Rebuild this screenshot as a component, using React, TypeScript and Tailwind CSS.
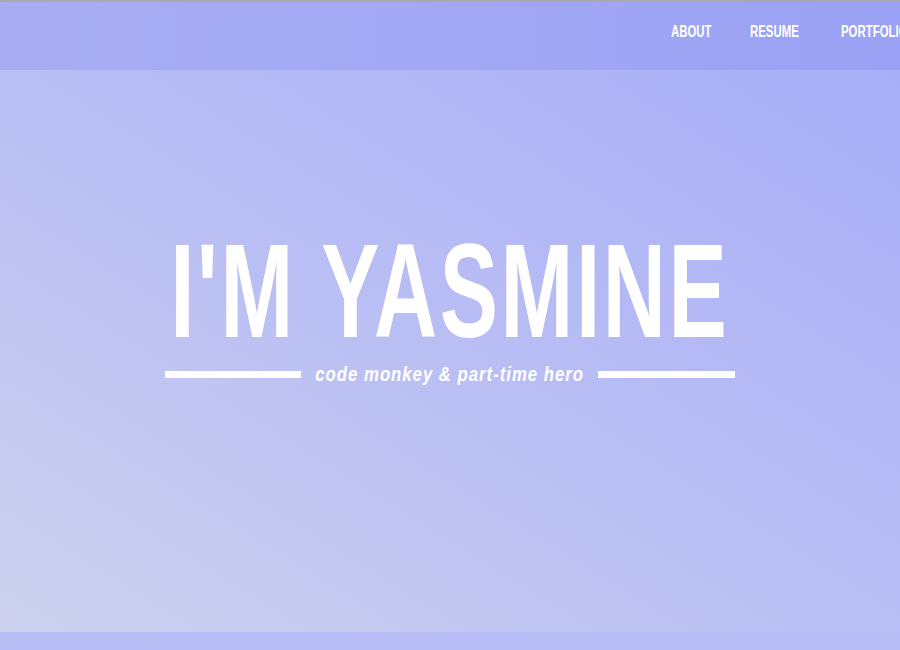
import React from 'react';

const NAV = ['ABOUT', 'RESUME', 'PORTFOLIO', 'CONTACT'];

const App: React.FC = () => {
  return (
    <div className="w-[900px] h-[650px] overflow-hidden flex flex-col font-['Liberation_Sans',Arial,sans-serif] text-white">
      <div className="h-[2px] bg-[#a9a9ad] shrink-0" />
      <header className="h-[68px] shrink-0 flex items-center bg-gradient-to-r from-[#a8adf2] to-[#9ba2f5]">
        <nav className="ml-[671px] flex gap-[26px] whitespace-nowrap -mt-[10px]">
          {NAV.map(item => (
            <a key={item} href="#" className="text-[15px] font-bold inline-block origin-left scale-x-[0.76] scale-y-[1.12]">
              {item}
            </a>
          ))}
        </nav>
      </header>

      <section className="h-[562px] shrink-0 flex flex-col items-center bg-gradient-to-tr from-[#cdd1ee] via-[#b9bef4] to-[#a8aef8]">
        <h1 className="mt-[161px] text-[118px] leading-none font-bold tracking-[0.03em] inline-block scale-x-[0.74] scale-y-[1.14] whitespace-nowrap">
          I'M YASMINE
        </h1>
        <div className="mt-[11px] flex items-center">
          <span className="w-[136px] h-[7px] bg-white" />
          <div className="w-[297px] flex justify-center">
            <span className="text-[19px] italic font-bold tracking-[0.06em] whitespace-nowrap inline-block scale-x-[0.88] scale-y-[1.1]">
              code monkey &amp; part-time hero
            </span>
          </div>
          <span className="w-[137px] h-[7px] bg-white" />
        </div>
      </section>

      <div className="flex-1 bg-[#b8bdf5]" />
    </div>
  );
};

export default App;
